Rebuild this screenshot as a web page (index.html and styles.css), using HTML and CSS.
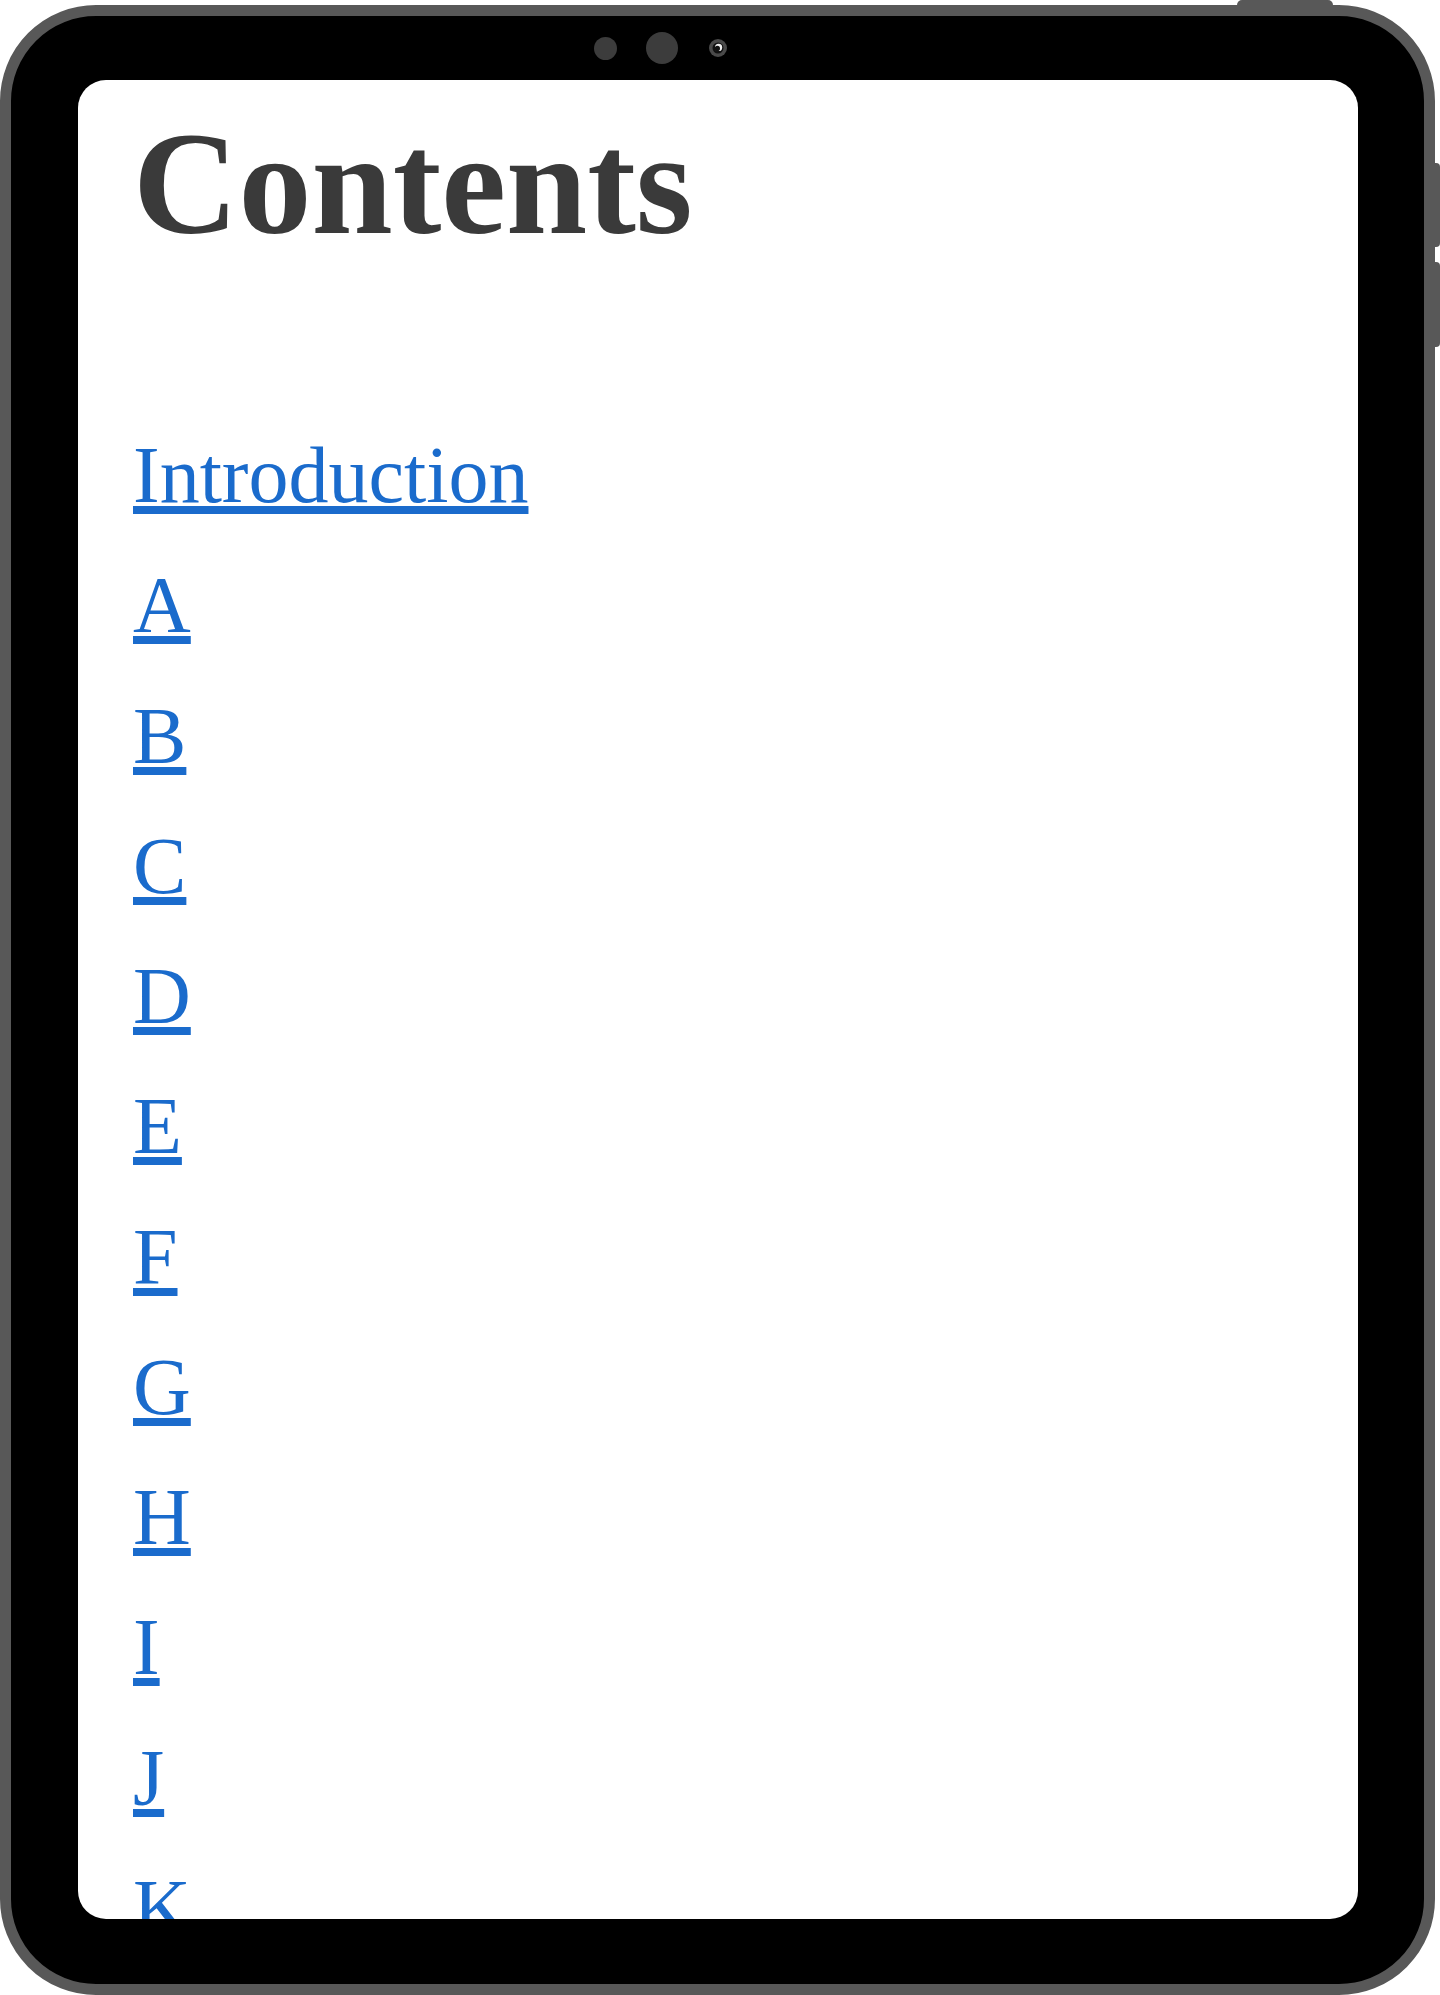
FILE: index.html
```html
<!DOCTYPE html>
<html lang="en">
<head>
<meta charset="utf-8">
<title>Contents</title>
<link rel="stylesheet" href="styles.css">
</head>
<body>
<div class="device">
  <span class="btn btn-top"></span>
  <span class="btn btn-side btn-side-1"></span>
  <span class="btn btn-side btn-side-2"></span>
  <div class="bezel-top">
    <span class="dot dot-small"></span>
    <span class="dot dot-big"></span>
    <svg class="camera" width="18" height="18" viewBox="0 0 18 18" aria-hidden="true">
      <circle cx="9" cy="9" r="9" fill="#4a4a4a"/>
      <circle cx="9" cy="9" r="5.5" fill="#111"/>
      <circle cx="9.6" cy="8.4" r="3.6" fill="#f2f2f2"/>
      <circle cx="8.4" cy="9.4" r="2.6" fill="#111"/>
    </svg>
  </div>
  <div class="screen">
    <h1 class="title">Contents</h1>
    <ul class="toc">
      <li><a href="#intro">Introduction</a></li>
      <li><a href="#a">A</a></li>
      <li><a href="#b">B</a></li>
      <li><a href="#c">C</a></li>
      <li><a href="#d">D</a></li>
      <li><a href="#e">E</a></li>
      <li><a href="#f">F</a></li>
      <li><a href="#g">G</a></li>
      <li><a href="#h">H</a></li>
      <li><a href="#i">I</a></li>
      <li><a href="#j">J</a></li>
      <li><a href="#k">K</a></li>
    </ul>
  </div>
  <div class="bezel-bottom"></div>
</div>
</body>
</html>
```

FILE: styles.css
```css
html, body {
  margin: 0;
  padding: 0;
  background: #ffffff;
}

body {
  width: 1440px;
  height: 1995px;
  overflow: hidden;
  font-family: "Liberation Serif", "Times New Roman", serif;
}

.device {
  position: relative;
  box-sizing: border-box;
  margin-top: 5px;
  width: 1435px;
  height: 1990px;
  border: 11px solid #585858;
  border-radius: 96px;
  background: #000000;
  padding: 0 66px 0 67px;
}

.btn {
  position: absolute;
  background: #585858;
  display: block;
}

.btn-top {
  top: -16px;
  left: 1226px;
  width: 96px;
  height: 5px;
  border-radius: 5px 5px 0 0;
}

.btn-side {
  left: 1424px;
  width: 5px;
  border-radius: 0 4px 4px 0;
}

.btn-side-1 {
  top: 147px;
  height: 84px;
}

.btn-side-2 {
  top: 246px;
  height: 85px;
}

.bezel-top {
  height: 64px;
  display: flex;
  align-items: center;
  padding-left: 516px;
}

.dot {
  display: block;
  border-radius: 50%;
  background: #3c3c3c;
}

.dot-small {
  width: 23px;
  height: 23px;
}

.dot-big {
  width: 32px;
  height: 32px;
  margin-left: 29px;
}

.camera {
  display: block;
  margin-left: 31px;
}

.screen {
  box-sizing: border-box;
  height: 1839px;
  background: #ffffff;
  border-radius: 28px;
  overflow: hidden;
  padding: 31px 0 0 55px;
}

.title {
  margin: 0;
  font-family: "Liberation Serif", "Times New Roman", serif;
  font-weight: bold;
  font-size: 146px;
  line-height: 146px;
  color: #3a3a3a;
}

.toc {
  list-style: none;
  margin: 153px 0 0 0;
  padding: 0;
}

.toc li {
  font-size: 80px;
  line-height: 130.25px;
  height: 130.25px;
}

.toc a {
  color: #1a6bcc;
  text-decoration: underline;
}
```
